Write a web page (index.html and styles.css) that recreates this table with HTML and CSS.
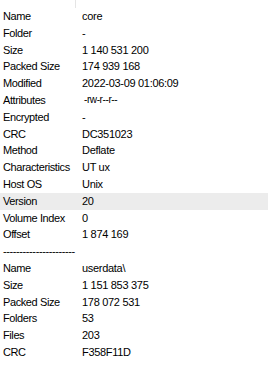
FILE: index.html
```html
<!DOCTYPE html>
<html lang="en">
<head>
    <meta charset="UTF-8">
    <title>Properties</title>
    <link rel="stylesheet" href="styles.css">
</head>
<body>
    <div class="list-header">
        <div class="header-cell"></div>
        <div class="header-cell"></div>
    </div>

    <div class="prop-list">
        <div class="prop-row"><span class="prop-name">Name</span><span class="prop-value">core</span></div>
        <div class="prop-row"><span class="prop-name">Folder</span><span class="prop-value">-</span></div>
        <div class="prop-row"><span class="prop-name">Size</span><span class="prop-value">1 140 531 200</span></div>
        <div class="prop-row"><span class="prop-name">Packed Size</span><span class="prop-value">174 939 168</span></div>
        <div class="prop-row"><span class="prop-name">Modified</span><span class="prop-value">2022-03-09 01:06:09</span></div>
        <div class="prop-row"><span class="prop-name">Attributes</span><span class="prop-value attr">-rw-r--r--</span></div>
        <div class="prop-row"><span class="prop-name">Encrypted</span><span class="prop-value">-</span></div>
        <div class="prop-row"><span class="prop-name">CRC</span><span class="prop-value">DC351023</span></div>
        <div class="prop-row"><span class="prop-name">Method</span><span class="prop-value">Deflate</span></div>
        <div class="prop-row"><span class="prop-name">Characteristics</span><span class="prop-value">UT ux</span></div>
        <div class="prop-row"><span class="prop-name">Host OS</span><span class="prop-value">Unix</span></div>
        <div class="prop-row selected"><span class="prop-name">Version</span><span class="prop-value">20</span></div>
        <div class="prop-row"><span class="prop-name">Volume Index</span><span class="prop-value">0</span></div>
        <div class="prop-row"><span class="prop-name">Offset</span><span class="prop-value">1 874 169</span></div>
        <div class="prop-row"><span class="prop-name">----------------------</span><span class="prop-value"></span></div>
        <div class="prop-row"><span class="prop-name">Name</span><span class="prop-value">userdata\</span></div>
        <div class="prop-row"><span class="prop-name">Size</span><span class="prop-value">1 151 853 375</span></div>
        <div class="prop-row"><span class="prop-name">Packed Size</span><span class="prop-value">178 072 531</span></div>
        <div class="prop-row"><span class="prop-name">Folders</span><span class="prop-value">53</span></div>
        <div class="prop-row"><span class="prop-name">Files</span><span class="prop-value">203</span></div>
        <div class="prop-row"><span class="prop-name">CRC</span><span class="prop-value">F358F11D</span></div>
    </div>
</body>
</html>
```

FILE: styles.css
```css
body {
    margin: 0;
    padding: 0;
    background: #ffffff;
    color: #000000;
    font-family: 'Liberation Sans', Arial, sans-serif;
    font-size: 11px;
    overflow: hidden;
}

/* what is left of the column header */
.list-header {
    display: flex;
    height: 8px;
}

.header-cell {
    width: 75px;
    border-right: 1px solid #e5e5e5;
}

.header-cell + .header-cell {
    flex: 1;
    border-right: none;
}

.prop-list {
    display: flex;
    flex-direction: column;
}

.prop-row {
    display: flex;
    align-items: center;
    height: 16.8px;
    line-height: 16.8px;
    white-space: nowrap;
}

.prop-row.selected {
    background: #ececec;
}

.prop-name {
    width: 79px;
    padding-left: 3px;
    overflow: hidden;
    letter-spacing: -0.4px;
}

.prop-value {
    flex: 1;
    letter-spacing: -0.3px;
}

.prop-value.attr {
    padding-left: 2px;
    font-size: 10px;
    letter-spacing: -0.4px;
}
```
